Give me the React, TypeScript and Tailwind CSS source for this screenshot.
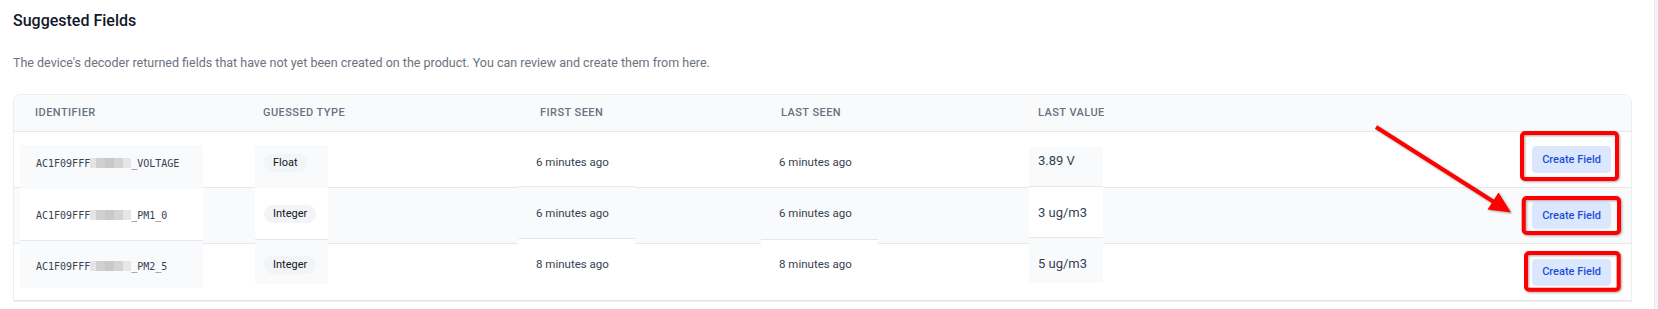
import React from 'react';

type Row = {
  prefix: string;
  suffix: string;
  type: string;
  first: string;
  last: string;
  value: string;
  rowCls: string;
  idCls: string;
  typeCls: string;
  firstCls: string;
  lastCls: string;
  valueCls: string;
};

// cell blocks are slightly offset from their rows, as in the capture
const rows: Row[] = [
  {
    prefix: 'AC1F09FFF',
    suffix: '_VOLTAGE',
    type: 'Float',
    first: '6 minutes ago',
    last: '6 minutes ago',
    value: '3.89 V',
    rowCls: 'h-[56px] bg-white',
    idCls: 'mt-[13px] h-[44px] pt-[13px] bg-[#f9fafb]',
    typeCls: 'mt-[13px] h-[43px] pt-[9px] bg-[#f9fafb]',
    firstCls: 'h-[54px] pt-[23px]',
    lastCls: 'h-[54px] pt-[23px]',
    valueCls: 'mt-[15px] h-[39px] pt-[6px] bg-[#f9fafb]',
  },
  {
    prefix: 'AC1F09FFF',
    suffix: '_PM1_0',
    type: 'Integer',
    first: '6 minutes ago',
    last: '6 minutes ago',
    value: '3 ug/m3',
    rowCls: 'h-[56px] bg-[#f9fafb]',
    idCls: 'mt-[1px] h-[51px] pt-[21px] bg-white',
    typeCls: 'h-[51px] pt-[17px] bg-white',
    firstCls: '-mt-[2px] h-[52px] pt-[19px] bg-[#f9fafb] border-t border-[#e5e7eb]',
    lastCls: '-mt-[1px] h-[52px] pt-[18px] bg-[#f9fafb] border-t border-[#e5e7eb]',
    valueCls: '-mt-[2px] h-[51px] pt-[18px] bg-white border-t border-[#e5e7eb]',
  },
  {
    prefix: 'AC1F09FFF',
    suffix: '_PM2_5',
    type: 'Integer',
    first: '8 minutes ago',
    last: '8 minutes ago',
    value: '5 ug/m3',
    rowCls: 'h-[57px] bg-white',
    idCls: '-mt-[4px] h-[48px] pt-[20px] bg-[#f9fafb] border-t border-[#e5e7eb]',
    typeCls: '-mt-[5px] h-[45px] pt-[16px] bg-[#f9fafb] border-t border-[#e5e7eb]',
    firstCls: '-mt-[6px] h-[50px] pt-[18px] bg-white border-t border-[#e5e7eb]',
    lastCls: '-mt-[5px] h-[50px] pt-[17px] bg-white border-t border-[#e5e7eb]',
    valueCls: '-mt-[7px] h-[46px] pt-[18px] bg-[#f9fafb] border-t border-[#e5e7eb]',
  },
];

function Redacted() {
  return (
    <span className="inline-flex h-[10px] w-[41px] align-[-1px]">
      <span className="w-[6px] bg-[#e4e4e4]" />
      <span className="w-[9px] bg-[#d0d0d0]" />
      <span className="w-[9px] bg-[#c9c9c9]" />
      <span className="w-[9px] bg-[#d4d4d4]" />
      <span className="w-[8px] bg-[#e6e6e6]" />
    </span>
  );
}

function Annotations() {
  return (
    <svg
      className="pointer-events-none absolute left-0 top-0 drop-shadow-[1px_1px_1px_rgba(0,0,0,0.35)]"
      width={1654}
      height={309}
    >
      <g fill="none" stroke="#ff0000" strokeWidth={4}>
        <rect x={1522} y={133} width={95} height={46} rx={3} />
        <rect x={1523.7} y={198} width={95.3} height={35} rx={3} />
        <rect x={1526} y={253} width={92.7} height={36.7} rx={3} />
        <line x1={1376} y1={127} x2={1494} y2={202} strokeWidth={4} />
      </g>
      <polygon points="1511,212.5 1487.5,209.5 1498.5,192.5" fill="#ff0000" />
    </svg>
  );
}

export default function App() {
  return (
    <div className="flex h-[309px] w-full overflow-hidden bg-white font-[Roboto,sans-serif]">
      <div className="relative flex-1 pl-[13px] pr-[22px] pt-[11px]">
        <h2 className="text-[16px] font-medium leading-[20px] text-[#111827]">Suggested Fields</h2>
        <p className="mt-[24px] text-[12.5px] leading-[16px] text-[#6b7280]">
          The device's decoder returned fields that have not yet been created on the product. You can review and create
          them from here.
        </p>

        <div className="mt-[23px] rounded-t-[8px] border border-[#eceef1]">
          <div className="flex h-[37px] items-center rounded-t-[8px] border-b border-[#e5e7eb] bg-[#f9fafb] text-[11px] font-medium uppercase tracking-[0.04em] text-[#6b7280]">
            <div className="w-[228px] shrink-0 pl-[21px]">Identifier</div>
            <div className="w-[276px] shrink-0 pl-[21px]">Guessed Type</div>
            <div className="w-[243px] shrink-0 pl-[22px]">First Seen</div>
            <div className="w-[256px] shrink-0 pl-[20px]">Last Seen</div>
            <div className="flex-1 pl-[21px]">Last Value</div>
          </div>

          {rows.map((r, i) => (
            <div key={i} className={`flex items-start border-b border-[#e5e7eb] ${r.rowCls}`}>
              <div className="w-[228px] shrink-0">
                <div
                  className={`ml-[6px] w-[183px] pl-[16px] font-['DejaVu_Sans_Mono',monospace] text-[10px] leading-[12px] whitespace-nowrap text-[#374151] ${r.idCls}`}
                >
                  {r.prefix}
                  <Redacted />
                  {r.suffix}
                </div>
              </div>
              <div className="w-[276px] shrink-0">
                <div className={`ml-[13px] flex w-[73px] items-start pl-[9px] ${r.typeCls}`}>
                  <span className="flex h-[18px] items-center rounded-full bg-[#f3f4f6] px-[9px] text-[11px] text-[#111827]">
                    {r.type}
                  </span>
                </div>
              </div>
              <div className="w-[243px] shrink-0">
                <div className={`w-[117px] pl-[18px] text-[11.5px] leading-[14px] text-[#374151] ${r.firstCls}`}>
                  {r.first}
                </div>
              </div>
              <div className="w-[256px] shrink-0">
                <div className={`w-[117px] pl-[18px] text-[11.5px] leading-[14px] text-[#374151] ${r.lastCls}`}>
                  {r.last}
                </div>
              </div>
              <div className="flex-1">
                <div className={`ml-[12px] w-[74px] pl-[9px] text-[13px] leading-[16px] text-[#374151] ${r.valueCls}`}>
                  {r.value}
                </div>
              </div>
              <div className="self-center pr-[20px]">
                <button className="h-[27px] rounded-[4px] bg-[#dbe7fd] px-[10px] text-[11px] font-medium text-[#1f4fd6]">
                  Create Field
                </button>
              </div>
            </div>
          ))}
        </div>

        <Annotations />
      </div>
      <div className="w-[4px] shrink-0 border-l border-[#e5e7eb] bg-[#f3f4f6]" />
    </div>
  );
}
